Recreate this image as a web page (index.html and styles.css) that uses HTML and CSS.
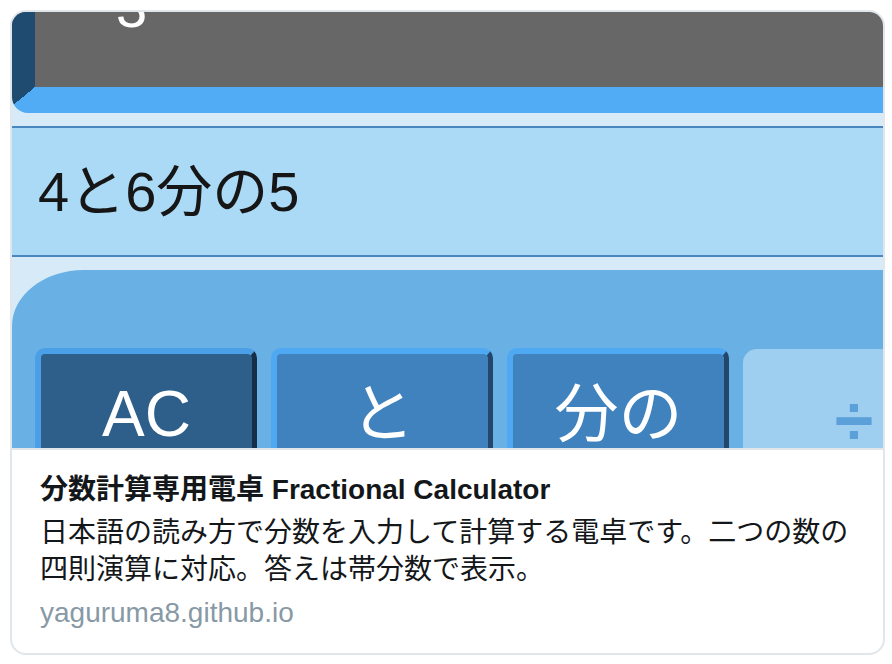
FILE: index.html
```html
<!DOCTYPE html>
<html lang="ja">
<head>
<meta charset="utf-8">
<title>分数計算専用電卓 Fractional Calculator</title>
<link rel="stylesheet" href="styles.css">
</head>
<body>
<div class="card">
  <div class="media">
    <div class="screen"><span class="screen-digit">3</span></div>
    <div class="bezel"></div>
    <div class="strip"></div>
    <div class="display">4と6分の5</div>
    <div class="strip"></div>
    <div class="keypad">
      <div class="key key-ac"><span class="key-label">AC</span></div>
      <div class="key"><span class="key-label">と</span></div>
      <div class="key"><span class="key-label">分の</span></div>
      <div class="key key-op"><span class="key-label">÷</span></div>
    </div>
  </div>
  <div class="body">
    <div class="title">分数計算専用電卓 Fractional Calculator</div>
    <div class="desc">日本語の読み方で分数を入力して計算する電卓です。二つの数の四則演算に対応。答えは帯分数で表示。</div>
    <div class="url">yaguruma8.github.io</div>
  </div>
</div>
</body>
</html>
```
FILE: styles.css
```css
html, body {
  margin: 0;
  padding: 0;
  background: #ffffff;
}

body {
  font-family: "Liberation Sans", "Noto Sans CJK JP", sans-serif;
}

.card {
  margin: 10px 0 0 10px;
  width: 875px;
  box-sizing: border-box;
  border: 2px solid #e1e6ea;
  border-radius: 16px;
  overflow: hidden;
  background: #ffffff;
}

.media {
  height: 436px;
  overflow: hidden;
  border-bottom: 2px solid #e1e6ea;
  background: #d7eaf8;
}

.screen {
  height: 75px;
  background: #676767;
  border-left: 23px solid #1f4b70;
  padding-left: 81px;
  overflow: hidden;
}

.screen-digit {
  display: block;
  margin-top: -32px;
  font-size: 56px;
  line-height: 56px;
  color: #ffffff;
}

.bezel {
  height: 26px;
  background-color: #52abf5;
  background-image: linear-gradient(to bottom right, #1f4b70 50%, transparent 50%);
  background-size: 23px 19px;
  background-repeat: no-repeat;
  border-bottom-left-radius: 16px;
}

.strip {
  height: 13px;
  background: #d7eaf8;
}

.display {
  height: 127px;
  border-top: 2px solid #4a87be;
  border-bottom: 2px solid #4a87be;
  background: #abdaf7;
  padding-left: 26px;
  font-size: 56px;
  line-height: 127px;
  color: #161616;
  white-space: nowrap;
}

.keypad {
  display: flex;
  align-items: flex-start;
  gap: 14px;
  height: 178px;
  box-sizing: border-box;
  padding: 78px 0 0 23px;
  background: #69b0e4;
  border-top-left-radius: 72px 56px;
}

.key {
  flex: none;
  box-sizing: border-box;
  width: 222px;
  height: 160px;
  border-top: 6px solid #4fa8f2;
  border-left: 6px solid #4fa8f2;
  border-right: 5px solid #22476b;
  border-radius: 10px 10px 0 0;
  background: #3f82bd;
  padding-top: 28px;
  text-align: center;
}

.key-ac {
  background: #2d5f8a;
  border-top-color: #4a9fe6;
  border-left-color: #4a9fe6;
  border-right-color: #172f46;
}

.key-op {
  margin-top: 1px;
  border: none;
  border-radius: 14px 14px 0 0;
  background: #9ecff0;
  padding-top: 37px;
}

.key-label {
  display: block;
  font-size: 64px;
  line-height: 64px;
  color: #ffffff;
  white-space: nowrap;
}

.key-op .key-label {
  display: inline-block;
  font-size: 70px;
  line-height: 70px;
  font-weight: 700;
  color: #5ba0d8;
}

.body {
  padding: 22px 28px 21px 28px;
  font-size: 28px;
  line-height: 1.3125;
  color: #14171a;
}

.title {
  font-weight: 700;
  margin-bottom: 6px;
  white-space: nowrap;
}

.desc {
  margin-bottom: 7px;
}

.url {
  color: #8899a6;
}
```
